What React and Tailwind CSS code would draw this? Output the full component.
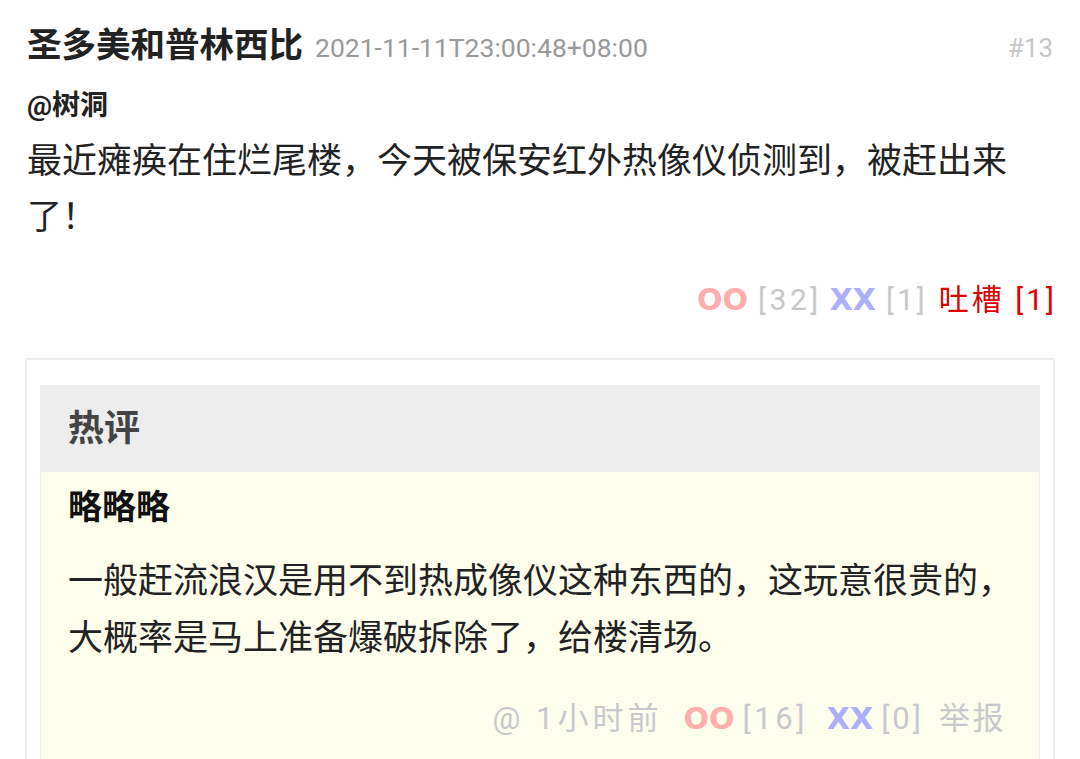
export default function App() {
  const font = { fontFamily: 'Roboto, "Noto Sans CJK SC", sans-serif' };
  const ox = { fontFamily: '"DejaVu Sans", Roboto, sans-serif' };
  return (
    <div className="w-[1080px] h-[759px] overflow-hidden bg-white text-[#222]" style={font}>
      <div className="px-[27px] pt-[20px]">
        <div className="flex items-baseline justify-between">
          <div className="flex items-baseline">
            <span className="text-[34.5px] leading-[50px] font-bold text-[#222]">圣多美和普林西比</span>
            <span className="ml-[12px] text-[26.5px] text-[#999]">2021-11-11T23:00:48+08:00</span>
          </div>
          <span className="text-[26px] text-[#c8c8c8]">#13</span>
        </div>
        <div className="mt-[18px] text-[28px] leading-[36px] font-bold text-[#222]">@树洞</div>
        <div className="mt-[10px] text-[35px] leading-[56px] text-[#222]">
          最近瘫痪在住烂尾楼，今天被保安红外热像仪侦测到，被赶出来了！
        </div>
        <div className="mt-[34px] mr-[-4px] flex justify-end items-baseline text-[30px] leading-[40px]">
          <span className="font-bold text-[30px] text-[#ffadad]" style={ox}>OO</span>
          <span className="ml-[10px] tracking-[3.5px] text-[#c8c8cc]">[32]</span>
          <span className="ml-[8px] font-bold text-[30px] text-[#aeaeff]" style={ox}>XX</span>
          <span className="ml-[10px] tracking-[3px] text-[#c8c8cc]">[1]</span>
          <span className="ml-[11px] tracking-[3px] text-[#dd0000]">吐槽 [1]</span>
        </div>
      </div>
      <div className="mx-[25px] mt-[38px] border-2 border-[#eeeeee] px-[13px] pt-[25px]">
        <div className="border border-[#eeeeee]">
          <div className="bg-[#ededed] h-[86px] flex items-center px-[27px]">
            <span className="text-[36px] font-bold text-[#444]">热评</span>
          </div>
          <div className="bg-[#fdfeec] pl-[27px] pr-[20px] pt-[13px] pb-[40px]">
            <div className="text-[34px] leading-[44px] font-bold text-[#111]">略略略</div>
            <div className="mt-[24px] text-[35px] leading-[57px] text-[#222]">
              一般赶流浪汉是用不到热成像仪这种东西的，这玩意很贵的，大概率是马上准备爆破拆除了，给楼清场。
            </div>
            <div className="mt-[32px] pr-[13px] flex justify-end items-baseline text-[31px] leading-[40px] text-[#c8c8cc]">
              <span className="tracking-[4px]">@ 1小时前</span>
              <span className="ml-[21px] font-bold text-[30px] text-[#ffadad]" style={ox}>OO</span>
              <span className="ml-[8px] tracking-[3.5px]">[16]</span>
              <span className="ml-[19px] font-bold text-[30px] text-[#aeaeff]" style={ox}>XX</span>
              <span className="ml-[8px] tracking-[3px]">[0]</span>
              <span className="ml-[15px] tracking-[2.5px]">举报</span>
            </div>
          </div>
        </div>
      </div>
    </div>
  );
}
